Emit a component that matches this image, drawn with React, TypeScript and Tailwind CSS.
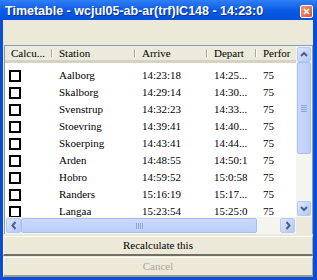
import React from "react";

const rows = [
  ["Aalborg", "14:23:18", "14:25...", "75"],
  ["Skalborg", "14:29:14", "14:30...", "75"],
  ["Svenstrup", "14:32:23", "14:33...", "75"],
  ["Stoevring", "14:39:41", "14:40...", "75"],
  ["Skoerping", "14:43:41", "14:44...", "75"],
  ["Arden", "14:48:55", "14:50:1", "75"],
  ["Hobro", "14:59:52", "15:0:58", "75"],
  ["Randers", "15:16:19", "15:17...", "75"],
  ["Langaa", "15:23:54", "15:25:0", "75"],
];

const cols = [
  { label: "Calcu...", w: "w-[48px]" },
  { label: "Station", w: "w-[83px]" },
  { label: "Arrive", w: "w-[72px]" },
  { label: "Depart", w: "w-[49px]" },
  { label: "Perfor", w: "w-[50px]" },
];

const Arrow = ({ dir }: { dir: "up" | "down" | "left" | "right" }) => {
  const d = {
    up: "M3 8 L6 5 L9 8",
    down: "M3 5 L6 8 L9 5",
    left: "M7.5 3 L4.5 6.5 L7.5 10",
    right: "M4.5 3 L7.5 6.5 L4.5 10",
  }[dir];
  return (
    <div className="w-full h-full rounded-[2px] border border-[#b6c9f4] bg-gradient-to-br from-[#dce7fd] to-[#b4c8f6] flex items-center justify-center">
      <svg width="12" height="13" viewBox="0 0 12 13">
        <path d={d} fill="none" stroke="#4d6185" strokeWidth="2" />
      </svg>
    </div>
  );
};

const HeaderCell = ({ label, w }: { label: string; w: string }) => (
  <div className={`${w} shrink-0 h-full relative flex items-center pl-[6px] overflow-hidden whitespace-nowrap`}>
    {label}
    <div className="absolute right-0 top-[3px] bottom-[3px] w-[2px] flex">
      <div className="w-px bg-[#aca899]" />
      <div className="w-px bg-white" />
    </div>
  </div>
);

export default function App() {
  return (
    <div className="w-[317px] h-[280px] bg-[#0a4ed8] flex flex-col overflow-hidden text-black font-['Liberation_Serif',serif]">
      {/* title bar */}
      <div className="h-[20px] shrink-0 bg-gradient-to-b from-[#2f7ff5] via-[#0a5ce6] to-[#0450dc] flex items-center pl-[5px] pr-[4px]">
        <div className="flex-1 text-white font-bold text-[12.5px] leading-none pt-[3px] whitespace-nowrap font-['Liberation_Sans',sans-serif] [text-shadow:1px_1px_0_#0a2f8c]">
          Timetable - wcjul05-ab-ar(trf)IC148 - 14:23:0
        </div>
        <div className="w-[13px] h-[13px] mt-[3px] rounded-[2px] border border-white bg-gradient-to-br from-[#ec9a7f] to-[#d9522b] flex items-center justify-center">
          <svg width="9" height="9" viewBox="0 0 9 9">
            <path d="M2 2 L7 7 M7 2 L2 7" stroke="white" strokeWidth="1.6" />
          </svg>
        </div>
      </div>

      {/* body */}
      <div className="flex-1 ml-[3px] mr-[4px] mb-[3px] bg-[#ece9d8] flex flex-col pt-[25px] gap-px">
        {/* list view */}
        <div className="w-[309px] ml-px h-[189px] shrink-0 border border-[#7f9db9] bg-white flex flex-col text-[11px]">
          <div className="flex h-[171px]">
            <div className="w-[291px] flex flex-col overflow-hidden">
              <div className="h-[17px] shrink-0 flex bg-[#ebeadb] border-b-[3px] border-[#d6d2c2]">
                {cols.map((c) => (
                  <HeaderCell key={c.label} label={c.label} w={c.w} />
                ))}
              </div>
              <div className="pt-[3px] flex flex-col">
                {rows.map((r) => (
                  <div key={r[0]} className="h-[17px] shrink-0 flex items-center whitespace-nowrap">
                    <div className="w-[48px] shrink-0 pl-[4px] pt-[2px]">
                      <div className="w-[12px] h-[12px] border-2 border-black bg-white" />
                    </div>
                    <div className="w-[83px] shrink-0 pl-[6px] pt-[2px]">{r[0]}</div>
                    <div className="w-[72px] shrink-0 pl-[6px] pt-[2px]">{r[1]}</div>
                    <div className="w-[49px] shrink-0 pl-[6px] pt-[2px] overflow-hidden">{r[2]}</div>
                    <div className="w-[39px] shrink-0 pl-[6px] pt-[2px]">{r[3]}</div>
                  </div>
                ))}
              </div>
            </div>
            {/* vertical scrollbar */}
            <div className="w-[16px] h-full bg-[#f5f5f0] flex flex-col p-px">
              <div className="h-[15px] shrink-0">
                <Arrow dir="up" />
              </div>
              <div className="h-[92px] shrink-0 rounded-[2px] border border-[#a8bdf0] bg-gradient-to-r from-[#cad9fc] to-[#bccefa] flex items-center justify-center">
                <div className="flex flex-col gap-px">
                  <div className="w-[6px] h-px bg-[#8ba4e6]" />
                  <div className="w-[6px] h-px bg-[#8ba4e6]" />
                  <div className="w-[6px] h-px bg-[#8ba4e6]" />
                  <div className="w-[6px] h-px bg-[#8ba4e6]" />
                </div>
              </div>
              <div className="flex-1" />
              <div className="h-[15px] shrink-0">
                <Arrow dir="down" />
              </div>
            </div>
          </div>
          {/* horizontal scrollbar */}
          <div className="flex flex-1">
            <div className="w-[291px] h-full bg-[#f5f5f0] flex p-px">
              <div className="w-[15px] shrink-0">
                <Arrow dir="left" />
              </div>
              <div className="w-[236px] shrink-0 rounded-[2px] border border-[#a8bdf0] bg-gradient-to-b from-[#cad9fc] to-[#bccefa] flex items-center justify-center">
                <div className="flex gap-px">
                  <div className="w-px h-[6px] bg-[#8ba4e6]" />
                  <div className="w-px h-[6px] bg-[#8ba4e6]" />
                  <div className="w-px h-[6px] bg-[#8ba4e6]" />
                  <div className="w-px h-[6px] bg-[#8ba4e6]" />
                </div>
              </div>
              <div className="flex-1" />
              <div className="w-[15px] shrink-0">
                <Arrow dir="right" />
              </div>
            </div>
            <div className="flex-1 bg-[#ece9d8]" />
          </div>
        </div>

        {/* buttons */}
        <div className="h-[20px] shrink-0 mt-px flex items-center justify-center text-[11px] bg-[#ece9d8] border-t border-l border-white border-b-2 border-r border-b-[#716f64] border-r-[#aca899]">
          Recalculate this
        </div>
        <div className="h-[20px] shrink-0 flex items-center justify-center text-[11px] text-[#aca899] bg-[#ece9d8] border-t border-l border-white border-b-2 border-r border-b-[#9d9a8a] border-r-[#aca899]">
          Cancel
        </div>
      </div>
    </div>
  );
}
